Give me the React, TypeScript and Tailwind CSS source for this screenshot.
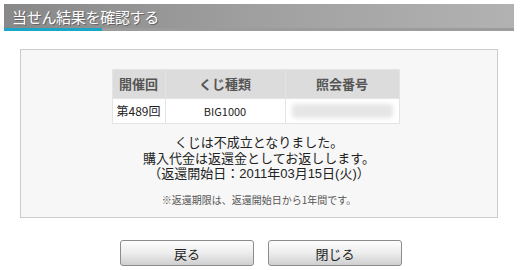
import React from 'react';

const font = { fontFamily: '"Noto Sans CJK JP", "Liberation Sans", sans-serif' };

const Button: React.FC<{ label: string }> = ({ label }) => (
  <button className="w-[134px] h-[26px] rounded-[3px] border border-[#8c8c8c] bg-gradient-to-b from-[#fdfdfd] via-[#ededed] to-[#cfcfcf] text-[13px] text-[#222] leading-none">
    {label}
  </button>
);

const App: React.FC = () => {
  return (
    <div className="w-[520px] h-[270px] bg-white overflow-hidden pt-[4px]" style={font}>
      {/* header */}
      <div className="mx-[4px] w-[510px]">
        <div className="h-[24px] bg-gradient-to-r from-[#888888] via-[#a0a0a0] to-[#b2b2b2] flex items-center pl-[8px]">
          <h1 className="text-[15px] text-white leading-none tracking-[-0.3px] [text-shadow:1px_1px_0_#666]">当せん結果を確認する</h1>
        </div>
        <div className="flex h-[3px]">
          <div className="w-[98px] bg-[#1aa6c6]" />
          <div className="flex-1 bg-[#9c9c9c]" />
        </div>
      </div>

      {/* content box */}
      <div className="mx-[20px] mt-[18px] w-[478px] h-[169px] border border-[#cccccc] bg-[#f7f7f7] flex flex-col items-center pt-[19px]">
        <table className="mr-[7px] border-separate border-spacing-[1px] bg-[#e4e4e4] text-[13px]">
          <thead>
            <tr className="h-[28px]">
              <th className="w-[52px] bg-[#dcdcdc] text-[#555] font-bold">開催回</th>
              <th className="w-[119px] bg-[#dcdcdc] text-[#555] font-bold">くじ種類</th>
              <th className="w-[113px] bg-[#dcdcdc] text-[#555] font-bold">照会番号</th>
            </tr>
          </thead>
          <tbody>
            <tr className="h-[24px]">
              <td className="bg-white text-center text-[#222] text-[12px]">第489回</td>
              <td className="bg-white text-center text-[#222] text-[11px]">BIG1000</td>
              <td className="bg-white px-[6px]">
                <div className="h-[14px] w-full rounded-sm bg-[#e6e6e6] blur-[2px]" />
              </td>
            </tr>
          </tbody>
        </table>

        <div className="mt-[11px] text-center text-[13px] text-[#222] leading-[15.5px] flex flex-col font-['Liberation_Sans','Noto_Sans_CJK_JP',sans-serif]">
          <p>くじは不成立となりました。</p>
          <p>購入代金は返還金としてお返しします。</p>
          <p>（返還開始日：2011年03月15日(火)）</p>
        </div>
        <p className="mt-[13px] text-[10px] text-[#555] leading-none">※返還期限は、返還開始日から1年間です。</p>
      </div>

      {/* buttons */}
      <div className="flex justify-center gap-[14px] mt-[22px] pl-[2px]">
        <Button label="戻る" />
        <Button label="閉じる" />
      </div>
    </div>
  );
};

export default App;
